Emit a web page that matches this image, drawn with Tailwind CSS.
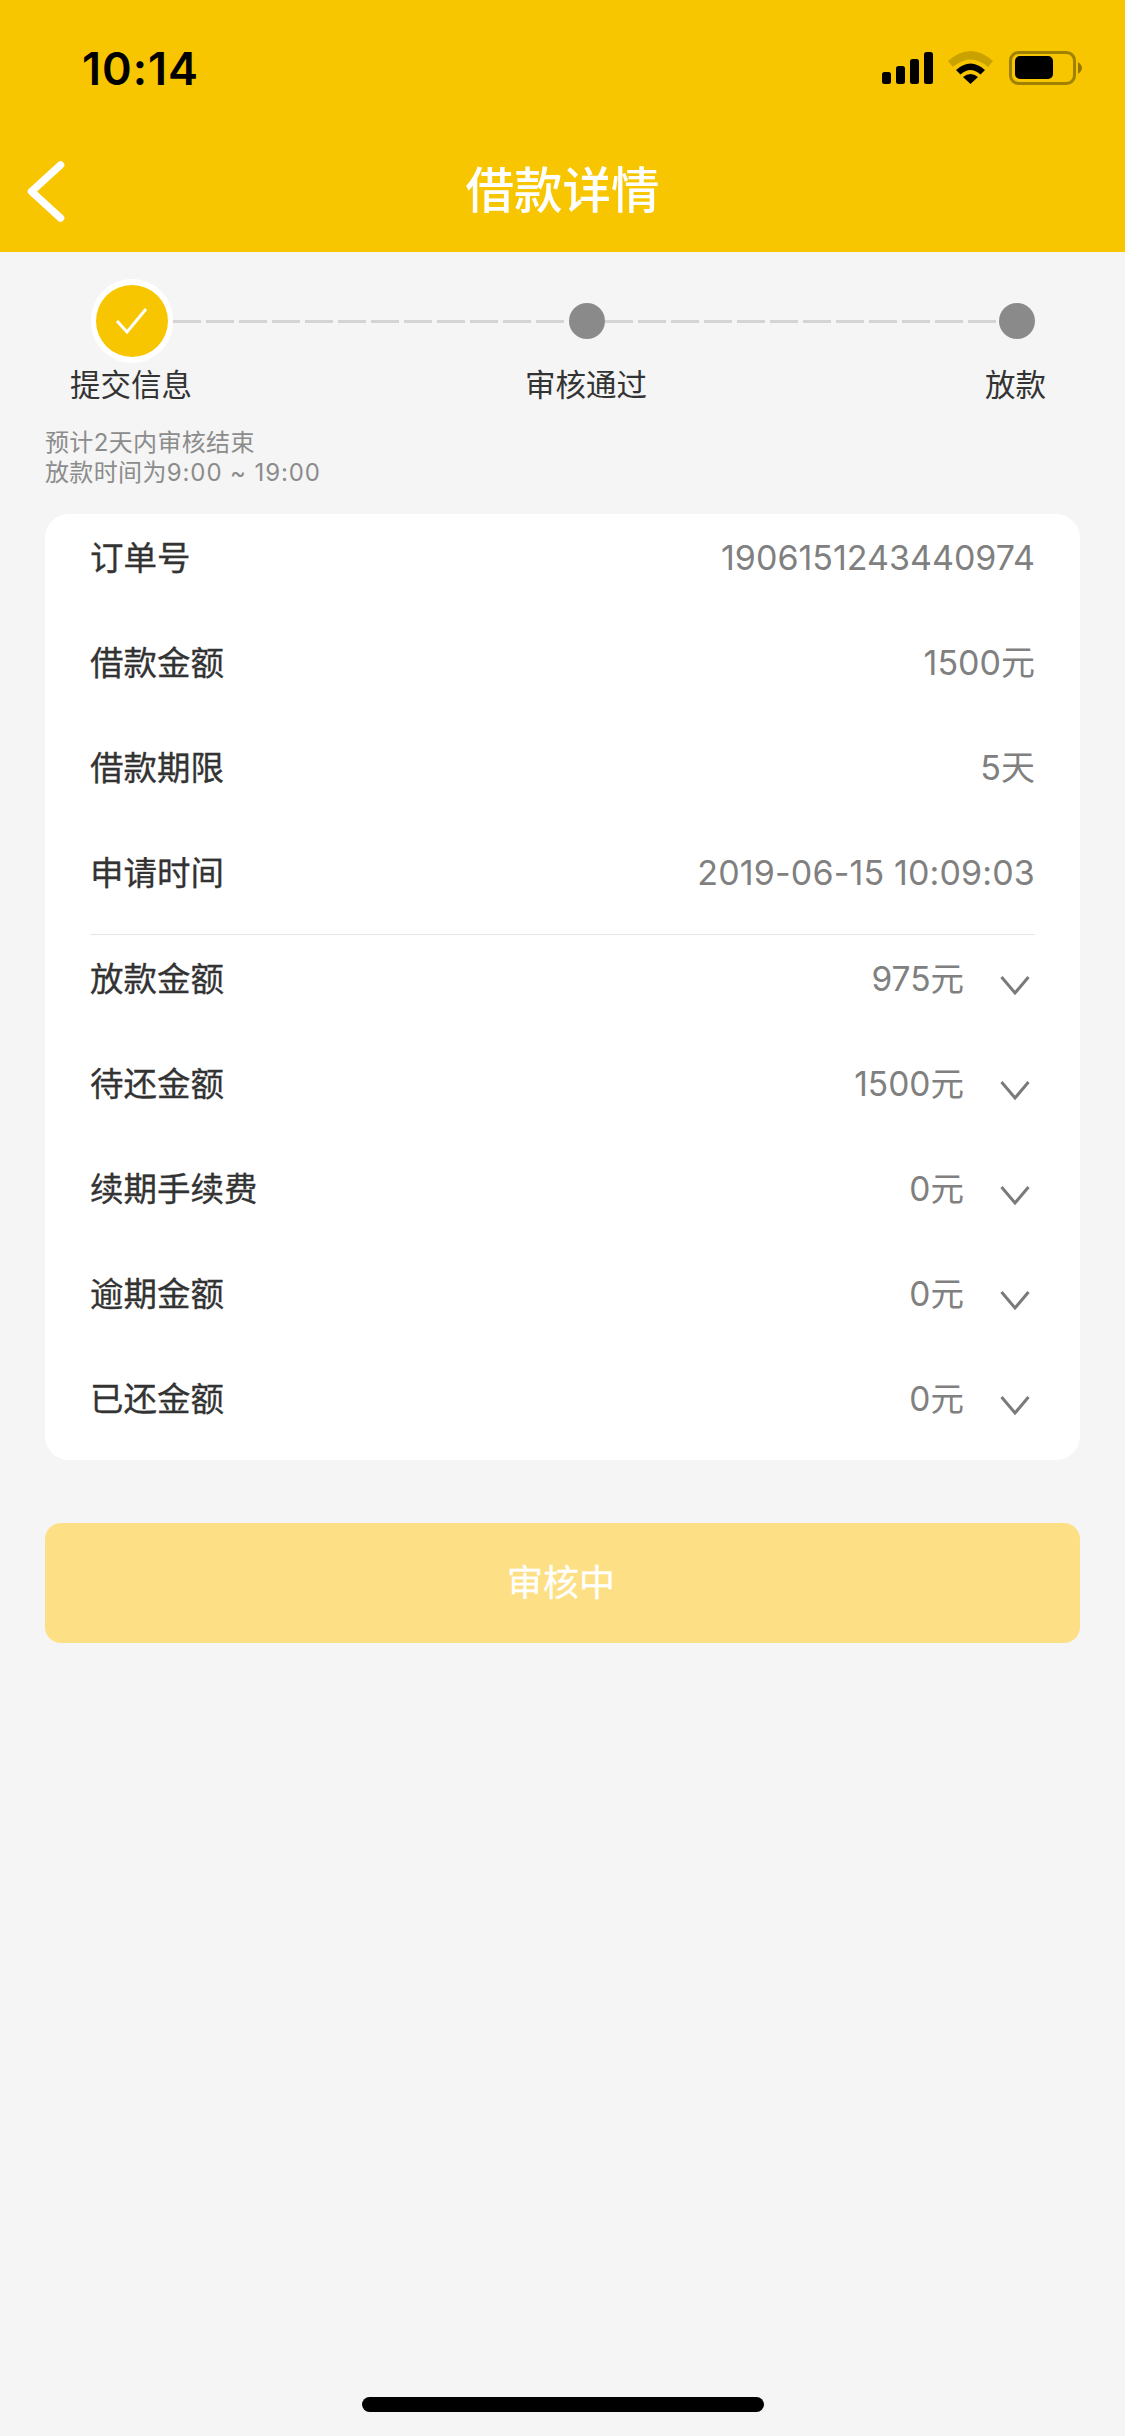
<!DOCTYPE html>
<html lang="zh-CN">
<head>
<meta charset="utf-8">
<title>借款详情</title>
<script src="https://cdn.jsdelivr.net/npm/@tailwindcss/browser@4"></script>
</head>
<body class="m-0 bg-[#f5f5f5]">
<div class="w-[1125px] h-[2436px] flex flex-col bg-[#f5f5f5] font-['Inter','Noto_Sans_CJK_SC',sans-serif] overflow-hidden">
  <header class="h-[252px] bg-[#f7c600] flex flex-col shrink-0">
    <div class="h-[130px] pt-[6px] flex items-center justify-between pl-[82px] pr-[43px]">
      <span class="text-[45px] leading-none font-semibold text-black tracking-[1px]">10:14</span>
      <svg width="200" height="36" viewBox="882 51 200 36" class="block">
        <rect x="882" y="73" width="9" height="12" rx="2.5" fill="#000"/>
        <rect x="896" y="67" width="9" height="18" rx="2.5" fill="#000"/>
        <rect x="910" y="60" width="9" height="25" rx="2.5" fill="#000"/>
        <rect x="924" y="53" width="9" height="32" rx="2.5" fill="#000"/>
        <path d="M948 62 Q970.5 42 993 62 L988 68 Q970.5 53 953 68 Z" fill="#000" fill-opacity="0.18"/>
        <path d="M956 71 Q970.5 58 985 71 L980.500 75.500 Q970.500 66.500 960.500 75.500 Z" fill="#000"/>
        <path d="M963 78 Q970.500 72 978 78 L970.500 85 Z" fill="#000"/>
        <rect x="1010.500" y="53.500" width="64" height="31" rx="8" fill="none" stroke="#000" stroke-opacity="0.35" stroke-width="3"/>
        <rect x="1015" y="57" width="38" height="23" rx="5" fill="#000"/>
        <path d="M1078 63 Q1082 66 1082 69 Q1082 72 1078 75 Z" fill="#000" fill-opacity="0.4"/>
      </svg>
    </div>
    <div class="h-[122px] grid grid-cols-[1fr_auto_1fr] items-center">
      <svg width="38" height="61" viewBox="0 0 38 61" class="block ml-[27px]" fill="none" stroke="#fff" stroke-width="7.5" stroke-linecap="round" stroke-linejoin="round">
        <path d="M33.500 4 L4.500 30.500 L33.500 57"/>
      </svg>
      <h1 class="text-[48.5px] leading-none font-medium text-white">借款详情</h1>
      <span></span>
    </div>
  </header>

  <section class="shrink-0">
    <div class="pt-[27px] pl-[91px] pr-[90px] flex items-center h-[111px]">
      <div class="w-[82px] h-[84px] rounded-full bg-white flex items-center justify-center shrink-0">
        <div class="w-[72px] h-[72px] rounded-full bg-[#f7c600] flex items-center justify-center">
          <svg width="34" height="28" viewBox="0 0 34 28" fill="none" stroke="#fff" stroke-width="3">
            <path d="M2 14 L12 25 L31 2"/>
          </svg>
        </div>
      </div>
      <div class="w-[396px] h-[3px] bg-[repeating-linear-gradient(90deg,#d4d4d4_0_28px,transparent_28px_33px)]"></div>
      <div class="w-[36px] h-[36px] rounded-full bg-[#8a8a8a] shrink-0"></div>
      <div class="flex-1 h-[3px] bg-[repeating-linear-gradient(90deg,#d4d4d4_0_28px,transparent_28px_33px)]"></div>
      <div class="w-[36px] h-[36px] rounded-full bg-[#8a8a8a] shrink-0"></div>
    </div>
    <div class="flex pl-[70px] pr-[79px] mt-[4px] text-[30.5px] leading-[36px] text-[#333]">
      <span>提交信息</span><span class="ml-[333px]">审核通过</span><span class="ml-auto">放款</span>
    </div>
    <p class="mt-[25px] ml-[45px] text-[24px] leading-[30px] text-[#8c8c8c] tracking-[0.35px]">预计2天内审核结束<br>放款时间为<span class="tracking-[0.9px]">9:00 ~ 19:00</span></p>
  </section>

  <section class="mt-[26px] mx-[45px] bg-white rounded-[24px] px-[45px] pt-[22px] pb-[39px] shrink-0 text-[34px] leading-[44px]">
    <div class="flex flex-col gap-[61px]">
      <div class="flex justify-between"><span class="text-[33.5px] text-[#333] [-webkit-text-stroke:0.3px_#333]">订单号</span><span class="text-[#808080]">1906151243440974</span></div>
      <div class="flex justify-between"><span class="text-[33.5px] text-[#333] [-webkit-text-stroke:0.3px_#333]">借款金额</span><span class="text-[#808080]">1500元</span></div>
      <div class="flex justify-between"><span class="text-[33.5px] text-[#333] [-webkit-text-stroke:0.3px_#333]">借款期限</span><span class="text-[#808080]">5天</span></div>
      <div class="flex justify-between"><span class="text-[33.5px] text-[#333] [-webkit-text-stroke:0.3px_#333]">申请时间</span><span class="text-[#808080] tracking-[0.15px]">2019-06-15 10:09:03</span></div>
    </div>
    <div class="h-px bg-[#e5e5e5] mt-[39px] mb-[22px]"></div>
    <div class="flex flex-col gap-[61px]">
      <div class="flex items-center"><span class="text-[33.5px] text-[#333] [-webkit-text-stroke:0.3px_#333]">放款金额</span><span class="ml-auto text-[33.5px] text-[#808080]">975元</span><svg width="30" height="21" viewBox="0 0 30 21" class="ml-[36px] mr-[5px] mt-[13px]" fill="none" stroke="#7a7a7a" stroke-width="3"><path d="M1.500 2 L15 18 L28.500 2"/></svg></div>
      <div class="flex items-center"><span class="text-[33.5px] text-[#333] [-webkit-text-stroke:0.3px_#333]">待还金额</span><span class="ml-auto text-[33.5px] text-[#808080]">1500元</span><svg width="30" height="21" viewBox="0 0 30 21" class="ml-[36px] mr-[5px] mt-[13px]" fill="none" stroke="#7a7a7a" stroke-width="3"><path d="M1.500 2 L15 18 L28.500 2"/></svg></div>
      <div class="flex items-center"><span class="text-[33.5px] text-[#333] [-webkit-text-stroke:0.3px_#333]">续期手续费</span><span class="ml-auto text-[33.5px] text-[#808080]">0元</span><svg width="30" height="21" viewBox="0 0 30 21" class="ml-[36px] mr-[5px] mt-[13px]" fill="none" stroke="#7a7a7a" stroke-width="3"><path d="M1.500 2 L15 18 L28.500 2"/></svg></div>
      <div class="flex items-center"><span class="text-[33.5px] text-[#333] [-webkit-text-stroke:0.3px_#333]">逾期金额</span><span class="ml-auto text-[33.5px] text-[#808080]">0元</span><svg width="30" height="21" viewBox="0 0 30 21" class="ml-[36px] mr-[5px] mt-[13px]" fill="none" stroke="#7a7a7a" stroke-width="3"><path d="M1.500 2 L15 18 L28.500 2"/></svg></div>
      <div class="flex items-center"><span class="text-[33.5px] text-[#333] [-webkit-text-stroke:0.3px_#333]">已还金额</span><span class="ml-auto text-[33.5px] text-[#808080]">0元</span><svg width="30" height="21" viewBox="0 0 30 21" class="ml-[36px] mr-[5px] mt-[13px]" fill="none" stroke="#7a7a7a" stroke-width="3"><path d="M1.500 2 L15 18 L28.500 2"/></svg></div>
    </div>
  </section>

  <button class="mt-[63px] mx-[45px] h-[120px] pr-[3px] rounded-[16px] bg-[#fde085] text-white text-[36px] [-webkit-text-stroke:0.3px_#fff] shrink-0">审核中</button>

  <div class="mt-auto mb-[24px] mx-auto w-[402px] h-[15px] rounded-full bg-black shrink-0"></div>
</div>
</body>
</html>
